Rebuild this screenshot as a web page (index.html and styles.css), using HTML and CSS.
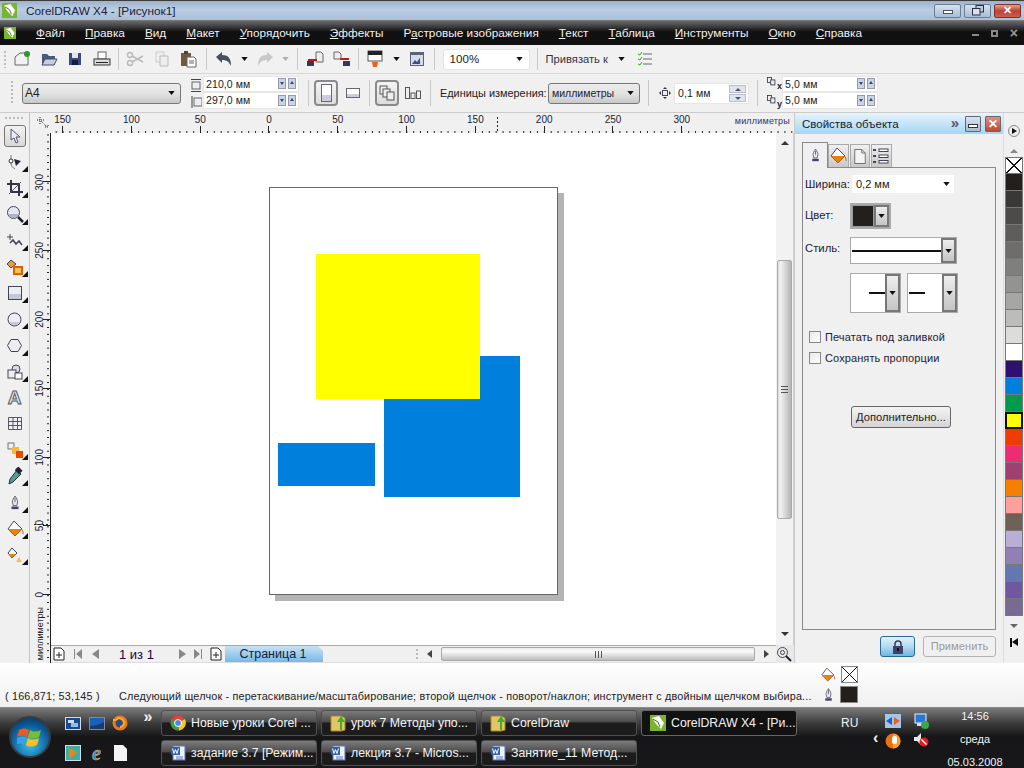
FILE: index.html
```html
<!DOCTYPE html>
<html lang="ru">
<head>
<meta charset="utf-8">
<title>CorelDRAW X4</title>
<link rel="stylesheet" href="styles.css">
</head>
<body>
<svg class="defs" width="0" height="0">
<defs>
<symbol id="cdr" viewBox="0 0 16 16"><rect width="16" height="16" fill="#7ab42c"/><path d="M2 3l7-2 5 7-3 6-5-5z" fill="#fff"/><path d="M3 4l5 3 2 5" stroke="#3c6a10" fill="none"/></symbol>
<symbol id="pen" viewBox="0 0 16 18"><path d="M8 1c2 3 3 5 3 7l-1 4H6L5 8c0-2 1-4 3-7z" fill="#e8e8f0" stroke="#55556a"/><path d="M8 3v5" stroke="#55556a"/><rect x="4" y="13" width="8" height="3" fill="#44446a"/></symbol>
<symbol id="fill" viewBox="0 0 18 18"><path d="M8 1l8 8-7 7-7-7z" fill="#fff" stroke="#44446a"/><path d="M2 9h14l-7 7z" fill="#f08000"/><path d="M15 9c2 1 2 3 2 5" stroke="#c06000" fill="none"/></symbol>
<symbol id="doc" viewBox="0 0 16 18"><path d="M2 1h8l4 4v12H2z" fill="#f4f4f4" stroke="#666"/><path d="M10 1v4h4" fill="none" stroke="#666"/></symbol>
<symbol id="add" viewBox="0 0 12 14"><path d="M1 1h7l3 3v9H1z" fill="#fff" stroke="#222"/><path d="M6 5v6M3 8h6" stroke="#222"/></symbol>
<symbol id="word" viewBox="0 0 16 16"><rect x="3" y="1" width="12" height="14" fill="#eef2fa" stroke="#5a78b8"/><path d="M6 12h7M6 14h7" stroke="#5a78b8"/><rect x="1" y="2" width="9" height="8" fill="#2f5fb4"/><path d="M2.5 3.5l1.500 5 1.500-4 1.500 4 1.500-5" fill="none" stroke="#fff"/></symbol>
<symbol id="folder" viewBox="0 0 16 18"><path d="M1 2h10l4 2v12l-4 1H1z" fill="#e4c468" stroke="#a88830"/><path d="M10 16V8H7l4-6 4 6h-3v8z" fill="#38b030"/></symbol>
<symbol id="tri" viewBox="0 0 8 5"><path d="M0 0h8L4 5z" fill="#111"/></symbol>
<symbol id="boxes" viewBox="0 0 12 12"><rect x=".5" y=".5" width="5" height="6" fill="#eee" stroke="#334"/><rect x="4.500" y="3.500" width="5" height="6" fill="#eee" stroke="#334"/></symbol>
</defs>
</svg>

<div class="title">
  <svg class="title-logo"><use href="#cdr"/></svg>
  <span class="title-text">CorelDRAW X4 - [Рисунок1]</span>
  <div class="win-btns">
    <span class="wb"><i class="wb-min"></i></span>
    <span class="wb"><svg width="12" height="11" viewBox="0 0 12 11"><rect x="4" y=".5" width="7.500" height="6.500" fill="#bcd" stroke="#234"/><rect x=".5" y="3.500" width="7.500" height="6.500" fill="#dde" stroke="#234"/></svg></span>
    <span class="wb wb-close">✕</span>
  </div>
</div>

<div class="menu">
  <svg class="menu-logo"><use href="#cdr"/></svg>
  <nav class="menu-items">
    <span><u>Ф</u>айл</span><span><u>П</u>равка</span><span><u>В</u>ид</span><span><u>М</u>акет</span><span><u>У</u>порядочить</span><span><u>Э</u>ффекты</span><span>Р<u>а</u>стровые изображения</span><span><u>Т</u>екст</span><span><u>Т</u>аблица</span><span><u>И</u>нструменты</span><span><u>О</u>кно</span><span><u>С</u>правка</span>
  </nav>
  <div class="doc-btns"><i class="db-min"></i><i class="db-res"></i><b>×</b></div>
</div>

<div class="bar bar-std">
  <span class="grip"></span>
  <span class="ic"><svg width="18" height="18" viewBox="0 0 18 18"><path d="M2 7l5-4h8v12H2z" fill="#f2f2f2" stroke="#666"/><circle cx="14" cy="4" r="3" fill="#2a9a20"/></svg></span>
  <span class="ic"><svg width="18" height="18" viewBox="0 0 18 18"><path d="M2 4h5l2 2h6v9H2z" fill="#4a5a7c"/><path d="M2 15l3-6h12l-3 6z" fill="#c8cedc" stroke="#44506a"/></svg></span>
  <span class="ic"><svg width="16" height="16" viewBox="0 0 16 16"><path d="M2 2h12v12H2z" fill="#3c4a78"/><rect x="5" y="2" width="6" height="5" fill="#dfe3ee"/><rect x="5" y="9" width="6" height="5" fill="#111c44"/></svg></span>
  <span class="ic"><svg width="18" height="18" viewBox="0 0 18 18"><rect x="5" y="2" width="8" height="7" fill="#fff" stroke="#666"/><rect x="1" y="9" width="16" height="6" fill="#dcdcdc" stroke="#333"/><rect x="3" y="12" width="12" height="1" fill="#222"/></svg></span>
  <span class="sep sep-a"></span>
  <span class="ic"><svg width="18" height="16" viewBox="0 0 18 16"><circle cx="4" cy="4" r="2.500" fill="none" stroke="#bbb" stroke-width="1.500"/><circle cx="4" cy="12" r="2.500" fill="none" stroke="#bbb" stroke-width="1.500"/><path d="M6 5l11 6M6 11l11-6" stroke="#bbb" stroke-width="1.500"/></svg></span>
  <span class="ic"><svg width="16" height="16" viewBox="0 0 16 16"><path d="M2 1h8v10H2z" fill="#eee" stroke="#ccc"/><path d="M6 5h8v10H6z" fill="#eee" stroke="#bbb"/></svg></span>
  <span class="ic"><svg width="18" height="18" viewBox="0 0 18 18"><rect x="2" y="3" width="10" height="13" fill="#6e5a3c"/><rect x="5" y="1" width="4" height="3" fill="#444"/><path d="M8 7h7l2 2v8H8z" fill="#fff" stroke="#666"/><path d="M10 11h5M10 13h5" stroke="#666"/></svg></span>
  <span class="sep sep-b"></span>
  <span class="ic ic-s"><svg width="18" height="16" viewBox="0 0 18 16"><path d="M1 6l6-5v3c6 0 9 3 9 11-2-4-4-6-9-6v3z" fill="#48505e"/></svg></span><svg class="dd" width="7" height="4"><use href="#tri"/></svg>
  <span class="ic ic-s2"><svg width="18" height="16" viewBox="0 0 18 16"><path d="M17 6l-6-5v3C5 4 2 7 2 15c2-4 4-6 9-6v3z" fill="#c8c8c8"/></svg></span><svg class="dd dd-off" width="7" height="4"><use href="#tri"/></svg>
  <span class="sep sep-c"></span>
  <span class="ic ic-i"><svg width="18" height="16" viewBox="0 0 18 16"><path d="M10 1h5l2 2v8h-7z" fill="#eee" stroke="#666"/><path d="M2 8h9v2H2z" fill="#c01818"/><rect x="1" y="10" width="7" height="5" fill="#333a60"/></svg></span>
  <span class="ic ic-i"><svg width="18" height="16" viewBox="0 0 18 16"><path d="M1 1h5l2 2v5H1z" fill="#eee" stroke="#666"/><path d="M7 7h9v2H7z" fill="#c01818"/><rect x="10" y="10" width="7" height="5" fill="#333a60"/></svg></span>
  <span class="sep sep-d"></span>
  <span class="ic ic-j"><svg width="16" height="18" viewBox="0 0 16 18"><rect x="1" y="1" width="14" height="10" fill="#fff" stroke="#555"/><rect x="1" y="1" width="14" height="4" fill="#222"/><path d="M5 12h6l-1 5H6z" fill="#f06018"/></svg></span><svg class="dd dd-j" width="7" height="4"><use href="#tri"/></svg>
  <span class="ic ic-k"><svg width="16" height="16" viewBox="0 0 16 16"><rect x="1" y="1" width="14" height="14" fill="#5a6478"/><rect x="2" y="4" width="12" height="10" fill="#d4dcec"/><path d="M3 13l3-4 2 2 3-4v6z" fill="#39517c"/></svg></span>
  <span class="sep sep-e"></span>
  <span class="combo"><span>100%</span><svg width="7" height="4"><use href="#tri"/></svg></span>
  <span class="sep sep-f"></span>
  <span class="snap">Привязать к</span><svg class="dd snap-dd" width="7" height="4"><use href="#tri"/></svg>
  <svg class="snap-ic" width="14" height="16" viewBox="0 0 14 16"><path d="M5 3h9M5 8h9M5 13h9" stroke="#667"/><path d="M0 3l2 1 2-3M0 8l2 1 2-3M0 13l2 1 2-3" stroke="#3a9a20" fill="none"/></svg>
</div>

<div class="bar bar-prop">
  <span class="grip grip-p"></span>
  <span class="select sel-a4"><span>A4</span><svg width="7" height="4"><use href="#tri"/></svg></span>
  <span class="dims">
    <span class="dim-ic"><svg width="10" height="13" viewBox="0 0 10 13"><path d="M0 .5h10M0 12.500h10" stroke="#444"/><rect x="1" y="3" width="8" height="7" fill="#eee" stroke="#666"/></svg><svg width="12" height="12" viewBox="0 0 12 12"><path d="M2 0v12" stroke="#444"/><rect x="4" y="2" width="8" height="8" fill="#eee" stroke="#666"/></svg></span>
    <span class="stack">
      <span class="field"><span>210,0 мм</span><i class="spin"></i><i class="spin spin-u"></i></span>
      <span class="field"><span>297,0 мм</span><i class="spin"></i><i class="spin spin-u"></i></span>
    </span>
  </span>
  <span class="sep sep-g"></span>
  <span class="tbtn on"><i class="pg-port"></i></span>
  <span class="tbtn"><i class="pg-land"></i></span>
  <span class="sep sep-h"></span>
  <span class="tbtn on tbtn-b"><svg width="16" height="16" viewBox="0 0 16 16"><rect x="1" y="1" width="7" height="8" fill="#eee" stroke="#555"/><rect x="4" y="4" width="7" height="8" fill="#eee" stroke="#555"/><rect x="8" y="7" width="7" height="8" fill="#eee" stroke="#555"/></svg></span>
  <span class="tbtn tbtn-c"><svg width="16" height="12" viewBox="0 0 16 12"><rect x=".5" y=".5" width="4" height="11" fill="#eee" stroke="#555"/><rect x="6" y="6" width="4" height="5.500" fill="#eee" stroke="#555"/><rect x="11.500" y="4" width="4" height="7.500" fill="#eee" stroke="#555"/></svg></span>
  <span class="sep sep-i"></span>
  <span class="lbl-units">Единицы измерения:</span>
  <span class="select sel-units"><span>миллиметры</span><svg width="7" height="4"><use href="#tri"/></svg></span>
  <span class="sep sep-j"></span>
  <svg class="nudge-ic" width="12" height="12" viewBox="0 0 12 12"><path d="M6 0l2 2H4zM6 12l2-2H4zM0 6l2-2v4zM12 6l-2-2v4z" fill="#334"/><rect x="3.500" y="3.500" width="5" height="5" fill="#eee" stroke="#445"/></svg>
  <span class="nudge"><span>0,1 мм</span><span class="nspin"><i></i><i class="down"></i></span></span>
  <span class="sep sep-k"></span>
  <span class="dims dims-xy">
    <span class="xy-ic">
      <span class="xy-row"><svg width="10" height="10"><use href="#boxes"/></svg><b>x</b></span>
      <span class="xy-row"><svg width="10" height="10"><use href="#boxes"/></svg><b>y</b></span>
    </span>
    <span class="stack">
      <span class="field"><span>5,0 мм</span><i class="spin"></i><i class="spin spin-u"></i></span>
      <span class="field"><span>5,0 мм</span><i class="spin"></i><i class="spin spin-u"></i></span>
    </span>
  </span>
</div>

<div class="main">
  <aside class="toolbox">
    <span class="grip-h"></span>
    <span class="tool tool-on"><svg width="14" height="16" viewBox="0 0 14 16"><path d="M3 1v11l3-2 2 5 2-1-2-5h4z" fill="#e8ecf4" stroke="#556"/></svg></span>
    <span class="tool fly"><svg width="16" height="18" viewBox="0 0 16 18"><path d="M4 2v8c0 3 2 5 4 6" fill="none" stroke="#778"/><circle cx="4" cy="8" r="2" fill="#fff" stroke="#333"/><path d="M7 6l7 2-5 5z" fill="#223"/></svg></span>
    <span class="tool fly"><svg width="16" height="16" viewBox="0 0 16 16"><path d="M4 0v12h12M0 4h12v12" fill="none" stroke="#334" stroke-width="2"/><path d="M2 14L14 2" stroke="#556"/></svg></span>
    <span class="tool fly"><svg width="18" height="18" viewBox="0 0 18 18"><circle cx="7.500" cy="7.500" r="6" fill="#e4e6f0" stroke="#445"/><path d="M2 9h11c-1 3-3 4-5 4s-5-1-6-4z" fill="#b0b4c4"/><path d="M12 12l5 5" stroke="#223" stroke-width="2.500"/></svg></span>
    <span class="tool fly"><svg width="18" height="14" viewBox="0 0 18 14"><path d="M4 0v6M1 3h6" stroke="#445"/><path d="M4 9l3-3 3 4 3-3 3 4" fill="none" stroke="#445" stroke-width="1.500"/></svg></span>
    <span class="tool fly"><svg width="18" height="16" viewBox="0 0 18 16"><path d="M5 1l5 4-5 4-4-4z" fill="#e0a040" stroke="#445"/><rect x="8" y="8" width="8" height="7" fill="#f4c060" stroke="#e06000" stroke-width="2"/></svg></span>
    <span class="tool fly"><svg width="14" height="14" viewBox="0 0 14 14"><rect x=".5" y=".5" width="13" height="13" fill="#eceef4" stroke="#445"/><rect x="1" y="8" width="12" height="5" fill="#c4c8d4"/></svg></span>
    <span class="tool fly"><svg width="15" height="15" viewBox="0 0 15 15"><circle cx="7.500" cy="7.500" r="6.500" fill="#eceef4" stroke="#445"/><path d="M2 10h11c-1 2-3 3-5.500 3S3 12 2 10z" fill="#c4c8d4"/></svg></span>
    <span class="tool fly"><svg width="15" height="13" viewBox="0 0 15 13"><path d="M4 .5h7l3.500 6-3.500 6H4L.5 6.500z" fill="#eceef4" stroke="#445"/></svg></span>
    <span class="tool fly"><svg width="16" height="16" viewBox="0 0 16 16"><circle cx="9" cy="5" r="4" fill="#d8dce8" stroke="#445"/><rect x="1" y="6" width="8" height="8" fill="#eceef4" stroke="#445"/><rect x="8" y="9" width="7" height="6" fill="#fff" stroke="#445"/></svg></span>
    <span class="tool tool-a">A</span>
    <span class="tool"><svg width="14" height="13" viewBox="0 0 14 13"><path d="M.5.500h13v12H.5zM.5 4.500h13M.5 8.500h13M5 .5v12M9.500.5v12" fill="#eef0f4" stroke="#556"/></svg></span>
    <span class="tool fly"><svg width="16" height="16" viewBox="0 0 16 16"><rect x="1" y="1" width="6" height="6" fill="#eee" stroke="#777"/><rect x="5" y="5" width="7" height="7" fill="#f8b840"/><rect x="9" y="9" width="7" height="7" fill="#e84800"/></svg></span>
    <span class="tool fly"><svg width="16" height="18" viewBox="0 0 16 18"><path d="M10 3l4 4-8 8-4 2 1-5z" fill="#5a9a88" stroke="#234"/><rect x="9" y="1" width="6" height="5" fill="#223" transform="rotate(45 12 3)"/></svg></span>
    <span class="tool fly"><svg width="14" height="18"><use href="#pen"/></svg></span>
    <span class="tool fly"><svg width="18" height="18"><use href="#fill"/></svg></span>
    <span class="tool fly"><svg width="16" height="16" viewBox="0 0 16 16"><path d="M5 1l5 5-5 5-4-5z" fill="#f4f4f4" stroke="#445"/><path d="M2 7h7l-4 4z" fill="#f08000"/><path d="M9 15l3-5 3 5z" fill="#f0c050"/></svg></span>
  </aside>

  <section class="work">
    <div class="corner"><svg width="12" height="12" viewBox="0 0 12 12"><path d="M0 3h8M3 0v8M4 4l6 6M8 10h3v-3" stroke="#222" stroke-dasharray="1 1" fill="none"/></svg></div>
    <div class="hruler">
      <span>150</span><span>100</span><span>50</span><span>0</span><span>50</span><span>100</span><span>150</span><span>200</span><span>250</span><span>300</span>
      <em class="ru-unit">миллиметры</em>
      <i class="h-mark"></i>
    </div>
    <div class="vruler">
      <span><b>300</b></span><span><b>250</b></span><span><b>200</b></span><span><b>150</b></span><span><b>100</b></span><span><b>50</b></span><span><b>0</b></span>
      <em class="ru-unit-v">миллиметры</em>
      <i class="v-mark"></i>
    </div>
    <div class="canvas">
      <div class="page"></div>
      <div class="shape s-big"></div>
      <div class="shape s-yellow"></div>
      <div class="shape s-small"></div>
    </div>
    <div class="vscroll">
      <span class="arr arr-up"></span>
      <span class="thumb"><i></i></span>
      <span class="arr arr-dn"></span>
    </div>
    <div class="nav">
      <svg class="n1" width="12" height="14"><use href="#add"/></svg>
      <span class="n n-first"></span>
      <span class="n n-prev"></span>
      <span class="n-count">1 из 1</span>
      <span class="n n-next"></span>
      <span class="n n-last"></span>
      <svg class="n2" width="12" height="14"><use href="#add"/></svg>
      <span class="page-tab">Страница 1</span>
      <span class="n-grip"></span>
      <span class="n n-left"></span>
      <span class="htrack"><i></i></span>
      <span class="n n-right"></span>
    </div>
    <div class="zoom-btn"><svg width="16" height="16" viewBox="0 0 16 16"><circle cx="6.500" cy="6.500" r="5" fill="#e8e8e8" stroke="#445"/><circle cx="6.500" cy="6.500" r="2" fill="none" stroke="#445"/><path d="M10 10l5 5" stroke="#223" stroke-width="2"/></svg></div>
  </section>

  <aside class="panel">
    <header class="p-head">
      <span class="p-title">Свойства объекта</span>
      <span class="p-more">»</span>
      <span class="p-btn"><i></i></span>
      <span class="p-btn p-close">✕</span>
    </header>
    <div class="p-body">
      <div class="tabs">
        <span class="tab tab-on"><svg width="13" height="17"><use href="#pen"/></svg></span>
        <span class="tab"><svg width="18" height="18"><use href="#fill"/></svg></span>
        <span class="tab"><svg width="14" height="17"><use href="#doc"/></svg></span>
        <span class="tab tab-l"><svg width="16" height="16" viewBox="0 0 16 16"><path d="M0 2h3M0 8h3M0 14h3" stroke="#445" stroke-width="2"/><rect x="6" y="1" width="9" height="2.500" fill="#fff" stroke="#445"/><rect x="6" y="7" width="9" height="2.500" fill="#fff" stroke="#445"/><rect x="6" y="12.500" width="9" height="2.500" fill="#fff" stroke="#445"/></svg></span>
      </div>
      <div class="box">
        <div class="row row-w"><label>Ширина:</label><span class="width-in"><span>0,2 мм</span><svg width="7" height="4"><use href="#tri"/></svg></span></div>
        <div class="row row-c"><label>Цвет:</label><span class="color-in"><i></i><b class="ddb"><svg width="7" height="4"><use href="#tri"/></svg></b></span></div>
        <div class="row row-s"><label>Стиль:</label><span class="style-in"><i class="ln"></i><b class="ddb"><svg width="7" height="4"><use href="#tri"/></svg></b></span></div>
        <div class="ends">
          <span class="end"><i class="ln-r"></i><b class="ddb"><svg width="7" height="4"><use href="#tri"/></svg></b></span>
          <span class="end end-2"><i class="ln-l"></i><b class="ddb"><svg width="7" height="4"><use href="#tri"/></svg></b></span>
        </div>
        <label class="chk chk-1"><i></i>Печатать под заливкой</label>
        <label class="chk chk-2"><i></i>Сохранять пропорции</label>
        <span class="more-btn">Дополнительно...</span>
      </div>
      <div class="p-foot">
        <span class="lock"><svg width="12" height="14" viewBox="0 0 12 14"><path d="M3 6V4a3 3 0 016 0v2" fill="none" stroke="#3a3a60" stroke-width="1.500"/><rect x="1" y="6" width="10" height="8" fill="#40406c"/><rect x="5" y="8" width="2" height="3" fill="#111"/></svg></span>
        <span class="apply">Применить</span>
      </div>
    </div>
  </aside>

  <aside class="palette">
    <span class="pal-play"><i></i></span>
    <span class="pal-up"></span>
    <div class="swatches">
      <i class="sw-x"></i>
      <i class="c1"></i><i class="c2"></i><i class="c3"></i><i class="c4"></i><i class="c5"></i><i class="c6"></i><i class="c7"></i><i class="c8"></i><i class="c9"></i><i class="c10"></i><i class="c11"></i><i class="c12"></i><i class="c13"></i><i class="c14"></i><i class="c15"></i><i class="c16"></i><i class="c17"></i><i class="c18"></i><i class="c19"></i><i class="c20"></i><i class="c21"></i><i class="c22"></i><i class="c23"></i><i class="c24"></i><i class="c25"></i><i class="c26"></i>
    </div>
    <span class="pal-dn"></span>
    <span class="pal-end"></span>
  </aside>
</div>

<footer class="status">
  <span class="coords">( 166,871; 53,145 )</span>
  <span class="msg">Следующий щелчок - перетаскивание/масштабирование; второй щелчок - поворот/наклон; инструмент с двойным щелчком выбира...</span>
  <div class="st-icons">
    <span class="st-row"><svg width="16" height="16"><use href="#fill"/></svg><i class="st-x"></i></span>
    <span class="st-row"><svg width="13" height="16"><use href="#pen"/></svg><i class="st-d"></i></span>
  </div>
</footer>

<div class="taskbar">
  <span class="orb"><svg width="26" height="26" viewBox="0 0 26 26"><path d="M2 6c4-2 7-2 10 0l-2 7c-3-2-6-2-10 0z" fill="#e85a20"/><path d="M13 6c3 2 7 2 11 0l-2 7c-4 2-8 2-11 0z" fill="#78c030"/><path d="M0 14c4-2 7-2 10 0l-2 7c-3-2-6-2-10 0z" fill="#38a0e8"/><path d="M11 14c3 2 7 2 11 0l-2 7c-4 2-8 2-11 0z" fill="#f8c020"/></svg></span>
  <div class="quick">
    <span class="q"><svg width="16" height="13" viewBox="0 0 16 13"><rect x=".5" y=".5" width="15" height="12" fill="#1a4a90" stroke="#cde"/><rect x="3" y="3" width="6" height="3" fill="#cde"/><rect x="6" y="6" width="7" height="4" fill="#9bd"/></svg></span>
    <span class="q"><svg width="16" height="13" viewBox="0 0 16 13"><rect x=".5" y=".5" width="15" height="12" fill="#1860b8" stroke="#889"/><path d="M1 9c4 0 8-1 14-4v7H1z" fill="#183a70"/></svg></span>
    <span class="q"><svg width="16" height="16" viewBox="0 0 16 16"><circle cx="8" cy="8" r="7.500" fill="#f07818"/><circle cx="8" cy="8" r="4.500" fill="#2a4a8c"/><path d="M1 5c3 0 4 1 5-2 3 0 6 2 6 5 0 2-2 4-4 4" fill="none" stroke="#f8b020" stroke-width="2"/></svg></span>
    <span class="q q-d"><svg width="10" height="12" viewBox="0 0 10 12"><path d="M1 0l8 6-8 6z" fill="#f08018"/></svg></span>
    <span class="q q-e">e</span>
    <span class="q"><svg width="13" height="16" viewBox="0 0 13 16"><path d="M0 0h9l4 4v12H0z" fill="#f4f4f4"/></svg></span>
  </div>
  <span class="more-q">»</span>
  <div class="tasks">
    <span class="task"><svg width="16" height="16" viewBox="0 0 16 16"><circle cx="8" cy="8" r="7.500" fill="#e84030"/><path d="M8 8L15 4a8 8 0 01-6 11.500z" fill="#f8c820"/><path d="M8 8l1 7.500A8 8 0 011.500 4z" fill="#38a040"/><circle cx="8" cy="8" r="3.500" fill="#4a88e8" stroke="#fff"/></svg><span>Новые уроки Corel ...</span></span>
    <span class="task"><svg width="16" height="18"><use href="#folder"/></svg><span>урок 7 Методы упо...</span></span>
    <span class="task"><svg width="16" height="18"><use href="#folder"/></svg><span>CorelDraw</span></span>
    <span class="task task-on"><svg width="16" height="16"><use href="#cdr"/></svg><span>CorelDRAW X4 - [Ри...</span></span>
    <span class="task"><svg width="16" height="16"><use href="#word"/></svg><span>задание 3.7 [Режим...</span></span>
    <span class="task"><svg width="16" height="16"><use href="#word"/></svg><span>лекция 3.7 - Micros...</span></span>
    <span class="task"><svg width="16" height="16"><use href="#word"/></svg><span>Занятие_11 Метод...</span></span>
  </div>
  <span class="lang">RU</span>
  <span class="tray-more">‹</span>
  <div class="tray">
    <svg width="16" height="16" viewBox="0 0 16 16"><rect y="1" width="16" height="14" fill="#a4c4ec"/><path d="M1 8l6-4v8z" fill="#1860c8"/><path d="M15 8l-6-4v8z" fill="#e86018"/></svg>
    <svg width="15" height="16" viewBox="0 0 15 16"><rect x="1" y="1" width="11" height="9" fill="#2878d8" stroke="#eef"/><rect x="3" y="10" width="7" height="3" fill="#dde"/><circle cx="11" cy="12" r="4" fill="#38a848"/></svg>
    <svg width="16" height="16" viewBox="0 0 16 16"><circle cx="8" cy="8" r="7.500" fill="#f07010"/><path d="M8 .5a7.500 7.500 0 010 15" fill="#f8a020"/><rect x="7" y="3" width="5" height="8" rx="2" fill="#fff"/></svg>
    <svg width="15" height="14" viewBox="0 0 15 14"><path d="M0 4h3l4-4v12L3 8H0z" fill="#e8e8e8"/><circle cx="10" cy="9" r="4.500" fill="#e81818"/><path d="M7.500 6.500l5 5" stroke="#fff" stroke-width="1.500"/></svg>
  </div>
  <div class="clock"><span>14:56</span><span>среда</span><span>05.03.2008</span></div>
</div>
</body>
</html>
```
FILE: styles.css
```css
*{box-sizing:border-box}
html,body{margin:0;padding:0}
body{width:1024px;height:768px;overflow:hidden;background:#f0f0f0;font:12px "Liberation Sans",sans-serif;color:#222;display:flex;flex-direction:column}
.defs{position:absolute}
i,em,b{font-style:normal;font-weight:normal;display:block}

/* title */
.title{height:21px;flex:none;display:flex;align-items:center;background:linear-gradient(#9db2cb,#b9cde3 45%,#a9bfd8);border-top:1px solid #3c3c3c;border-bottom:1px solid #777}
.title-logo{width:15px;height:15px;margin-left:2px;flex:none}
.title-text{margin-left:9px;color:#20203c;font-size:11.800px}
.win-btns{margin-left:auto;margin-right:3px;display:flex;gap:3px}
.wb{width:27px;height:14px;border:1px solid #6c7d92;border-radius:2px;background:linear-gradient(#d6e2ef,#a9bdd4);display:flex;align-items:center;justify-content:center}
.wb-min{width:10px;height:4px;background:#fff;border:1px solid #456;margin-top:3px}
.wb-close{background:linear-gradient(#e8a090,#c04030 50%,#c86050);border-color:#803028;color:#fff;font-size:11px;font-weight:bold;line-height:1}

/* menu */
.menu{height:24px;flex:none;display:flex;align-items:center;background:linear-gradient(#6a6a6a,#3a3a3a 25%,#101010 45%,#111);color:#f2f2f2;position:relative}
.menu-logo{width:12px;height:16px;margin-left:4px;flex:none}
.menu-items{margin-left:20px;display:flex;gap:20px;font-size:11.800px}
.menu-items span{white-space:nowrap}
.doc-btns{margin-left:auto;margin-right:6px;display:flex;align-items:center;gap:12px;color:#999}
.db-min{width:7px;height:2px;background:#888;margin-top:3px}
.db-res{width:7px;height:7px;border:2px solid #888}
.doc-btns b{font-size:14px;font-weight:bold;color:#999}

/* toolbars */
.bar{flex:none;display:flex;align-items:center;background:#f0f0f0;border-bottom:1px solid #d8d8d8}
.bar-std{height:29px;background:#f1f1f1}
.bar-prop{height:39px;border-bottom:1px solid #ccc}
.grip{width:2px;height:17px;margin-left:4px;background:repeating-linear-gradient(#bbb 0 2px,transparent 2px 4px);flex:none}
.grip-p{margin-left:11px;height:24px}
.ic{width:26.500px;height:24px;display:flex;align-items:center;justify-content:center;flex:none}
.bar-std .grip + .ic{margin-left:3px}
.sep{width:1px;height:22px;background:#c8c8c8;flex:none}
.sep-a{margin:0 3px}
.sep-b{margin:0 7px 0 4px}
.ic-s{width:20px}
.dd{flex:none;margin-left:7px}
.ic-s2{width:20px;margin-left:7px}
.dd-off{opacity:.3}
.sep-c{margin:0 4px 0 8px}
.ic-i{width:27px}
.sep-d{margin:0 4px 0 2px}
.ic-j{width:24px}
.dd-j{margin-left:6px}
.ic-k{width:26px;margin-left:4px}
.sep-e{margin:0 8px 0 4px}
.combo{width:87px;height:21px;background:#fff;border:1px solid #e4e4e4;border-radius:3px;display:flex;align-items:center;justify-content:space-between;padding:0 6px;font-size:11.500px;flex:none;letter-spacing:.1px}
.sep-f{margin:0 8px 0 7px}
.snap{font-size:11.200px;color:#334;white-space:nowrap}
.snap-dd{margin-left:10px}
.snap-ic{margin-left:13px}

.select{height:21px;display:flex;align-items:center;justify-content:space-between;background:linear-gradient(#ececec,#e2e2e2 50%,#c8c8c8);border:1px solid #777;border-radius:3px;padding:0 5px 0 2px;flex:none;font-size:12px}
.sel-a4{width:159px;margin-left:9px}
.dims{display:flex;align-items:center;margin-left:8px;flex:none}
.dim-ic{width:14px;display:flex;flex-direction:column;gap:4px;align-items:center}
.stack{display:flex;flex-direction:column;margin-top:-2px}
.field{width:96px;height:16.500px;background:#fff;border:1px solid #e6e6e6;display:flex;align-items:center;padding-left:2px;font-size:10.500px;letter-spacing:.1px}
.field span{flex:1;white-space:nowrap}
.spin{width:8px;height:11px;background:#c8d4e8;border:1px solid #99a;margin-right:2px;position:relative}
.spin::after{content:"";position:absolute;left:1px;top:3px;border:2px solid transparent;border-top:3px solid #446}
.spin-u::after{top:0;border-top:2px solid transparent;border-bottom:3px solid #446}
.sep-g{margin:0 5px 0 9px;height:26px}
.tbtn{width:24px;height:26px;display:flex;align-items:center;justify-content:center;flex:none;margin-right:7px}
.tbtn.on{border:2px solid #8a8a8a;border-radius:4px;background:linear-gradient(#f4f4f4,#dcdcdc)}
.pg-port{width:11px;height:18px;border:1px solid #667;background:linear-gradient(#fff 60%,#ccd 60%)}
.pg-land{width:14px;height:10px;border:1px solid #667;background:linear-gradient(#fff 60%,#ccd 60%)}
.tbtn:not(.on){width:15px}
.sep-h{margin:0 5px 0 2px;height:26px}
.tbtn-c{margin-left:-1px;margin-right:9px;width:16px!important}
.sep-i{margin:0 9px 0 0;height:26px}
.lbl-units{white-space:nowrap;font-size:10.900px;width:108px;flex:none}
.sel-units{width:92px;color:#223;padding-left:3px;font-size:10.500px}
.sep-j{margin:0 10px 0 8px;height:26px}
.nudge-ic{flex:none}
.nudge{width:75px;height:21px;margin-left:3px;background:#fff;border:1px solid #e6e6e6;display:flex;align-items:center;justify-content:space-between;padding:0 2px 0 3px;flex:none;font-size:10.500px;letter-spacing:.1px}
.nspin{display:flex;flex-direction:column;gap:1px}
.nspin i{width:17px;height:8px;background:#e0e4ec;border:1px solid #bbc;position:relative}
.nspin i::after{content:"";position:absolute;left:5px;top:-1px;border:3px solid transparent;border-bottom:3px solid #557}
.nspin i.down::after{top:2px;border-bottom:3px solid transparent;border-top:3px solid #557}
.sep-k{margin:0 9px 0 8px;height:26px}
.dims-xy{margin-left:0}
.xy-ic{width:15px;display:flex;flex-direction:column;gap:4px;flex:none}
.xy-row{display:flex;height:14px;font-size:9px;color:#223;line-height:9px;font-weight:bold}
.xy-row b{align-self:flex-end;font-weight:bold}

/* main */
.main{height:550px;flex:none;display:flex;background:#f0f0f0}
.toolbox{width:30px;flex:none;display:flex;flex-direction:column;align-items:center;border-right:1px solid #c4c4c4;padding-top:4px}
.grip-h{width:20px;height:2px;background:repeating-linear-gradient(90deg,#bbb 0 2px,transparent 2px 4px);margin-bottom:6px}
.tool{width:22px;height:26.200px;flex:none;display:flex;align-items:center;justify-content:center;position:relative}
.tool-on{height:22px;margin:0 0 2px;border:1px solid #777;border-radius:3px;background:linear-gradient(#f2f2f2,#d8d8d8)}
.fly::after{content:"";position:absolute;right:-2px;bottom:3px;border:3px solid transparent;border-right-color:#111;border-bottom-color:#111}
.tool-a{font:bold 19px "Liberation Sans",sans-serif;color:#e8eaf0;-webkit-text-stroke:1px #556}

.work{width:764px;flex:none;display:grid;grid-template-columns:21px 725px 18px;grid-template-rows:20px 512px 18px;position:relative}
.corner{display:flex;align-items:center;justify-content:center;padding-left:4px}
.hruler{grid-column:2/4;position:relative;display:flex;overflow:hidden;background:linear-gradient(90deg,#222 1px,transparent 1px) 4.700px 18px/6.880px 2px repeat-x;font-size:10px;color:#223}
.hruler span{width:68.800px;flex:none;text-align:center;line-height:12px;padding-top:1px;background:linear-gradient(#222,#222) center bottom/1px 7px no-repeat}
.hruler span:first-child{margin-left:-22.800px}
.ru-unit{position:absolute;right:4px;top:2px;font-size:9px;line-height:12px;background:#f0f0f0;color:#336;padding-left:2px;letter-spacing:.2px}
.h-mark{position:absolute;left:446px;top:4px;height:16px;width:1px;background:repeating-linear-gradient(#222 0 2px,transparent 2px 4px)}
.vruler{grid-row:2/4;position:relative;display:flex;flex-direction:column;padding-top:14.600px;overflow:hidden;border-right:1px solid #222;background:linear-gradient(#222 1px,transparent 1px) 17px 1.500px/2px 6.880px repeat-y;font-size:10px;color:#223}
.vruler span{height:68.800px;flex:none;display:flex;align-items:center;justify-content:flex-start;padding-left:4px;background:linear-gradient(#222,#222) right center/7px 1px no-repeat}
.vruler b{writing-mode:vertical-rl;transform:rotate(180deg);line-height:11px}
.ru-unit-v{position:absolute;left:5px;bottom:3px;font-size:9px;line-height:11px;writing-mode:vertical-rl;transform:rotate(180deg);background:#f0f0f0;color:#222}
.v-mark{position:absolute;left:4px;top:391px;width:16px;height:1px;background:repeating-linear-gradient(90deg,#222 0 2px,transparent 2px 4px)}
.canvas{position:relative;background:#fff;overflow:hidden}
.page{position:absolute;left:218px;top:54px;width:289px;height:408px;background:#fff;border:1px solid #666;box-shadow:6px 6px 0 #b4b4b4}
.shape{position:absolute}
.s-big{left:333px;top:223px;width:136px;height:141px;background:#0080dc}
.s-yellow{left:265px;top:121px;width:164px;height:145px;background:#ff0}
.s-small{left:227px;top:310px;width:97px;height:43px;background:#0080dc}
.vscroll{display:flex;flex-direction:column;align-items:center;background:#f2f2f2;border-right:1px solid #ccc;position:relative;padding-top:8px}
.arr{border:4px solid transparent}
.arr-up{border-bottom:4px solid #333;border-top:0}
.thumb{width:15px;height:259px;margin-top:115px;background:linear-gradient(90deg,#dedede,#f2f2f2 20%,#b4b4b4);border:1px solid #aaa;border-radius:2px;display:flex;align-items:center;justify-content:center}
.thumb i{width:7px;height:7px;background:repeating-linear-gradient(#555 0 1px,transparent 1px 3px)}
.arr-dn{border-top:4px solid #333;border-bottom:0;margin-top:113px}
.nav{display:flex;align-items:center;background:#f0f0f0;border-top:1px solid #aaa;border-bottom:1px solid #ddd;padding-left:2px;font-size:12px}
.n{width:8px;height:10px;flex:none;position:relative}
.n::after{content:"";position:absolute;top:0;border:5px solid transparent}
.n-first{margin-left:9px;border-left:1px solid #888}
.n-first::after{left:1px;border-right:6px solid #888;border-left:0}
.n-prev{margin-left:10px}
.n-prev::after{left:0;border-right:7px solid #888;border-left:0}
.n-count{width:35px;margin-left:19px;white-space:nowrap;font-size:13px;color:#204}
.n-next{margin-left:25px}
.n-next::after{left:0;border-left:7px solid #888;border-right:0}
.n-last{margin-left:7px;border-right:1px solid #888}
.n-last::after{left:0;border-left:6px solid #888;border-right:0}
.n2{margin-left:8px;flex:none}
.n1{flex:none}
.page-tab{width:98px;height:16px;margin-left:3px;flex:none;background:linear-gradient(#c6e2f4,#7ab8e8);clip-path:polygon(0 0,93px 0,100% 5px,100% 100%,0 100%);text-align:center;font-size:12.500px;line-height:16px;color:#123;padding-right:2px}
.n-grip{width:2px;height:11px;margin-left:93px;background:repeating-linear-gradient(#bbb 0 2px,transparent 2px 4px);flex:none}
.n-left{margin-left:9px;width:5px}
.n-left::after{left:0;border-width:4px 5px 4px 0;border-right-color:#444;top:1px}
.htrack{width:314px;height:14px;margin-left:9px;flex:none;background:linear-gradient(#ececec,#fafafa 30%,#bdbdbd);border:1px solid #a8a8a8;border-radius:2px;display:flex;align-items:center;justify-content:center}
.htrack i{width:7px;height:7px;background:repeating-linear-gradient(90deg,#555 0 1px,transparent 1px 3px)}
.n-right{margin-left:9px;width:5px}
.n-right::after{left:0;border-width:4px 0 4px 5px;border-left-color:#444;top:1px}
.zoom-btn{display:flex;align-items:center;justify-content:flex-start;background:#e8e8e8}

/* panel */
.panel{width:210px;flex:none;display:flex;flex-direction:column;border-left:1px solid #ccc;border-right:1px solid #ddd;font-size:11px}
.p-head{height:20px;flex:none;display:flex;align-items:center;background:linear-gradient(#e4f2fb,#a4d6f4);padding-left:7px;margin-top:1px}
.p-title{font-size:11.500px;color:#123;white-space:nowrap}
.p-more{margin-left:auto;margin-right:2px;font-size:15px;font-weight:bold;color:#556;line-height:1;margin-bottom:3px}
.p-btn{width:16px;height:16px;margin-left:4px;border:1px solid #667;border-radius:1px;background:linear-gradient(#d8e4f0,#a8bcd0);display:flex;align-items:center;justify-content:center}
.p-btn i{width:10px;height:4px;background:#fff;border:1px solid #334;margin-top:3px}
.p-close{background:linear-gradient(#e09080,#c04830);color:#fff;font-weight:bold;font-size:12px;line-height:1;margin-right:2px}
.p-body{flex:1;padding:8px 7px 0 7px;display:flex;flex-direction:column}
.tabs{display:flex;align-items:flex-end;height:25px;flex:none}
.tab{width:20.500px;height:23px;background:linear-gradient(#f0f0f0,#c8c8c8);border:1px solid #aaa;border-bottom:0;display:flex;align-items:center;justify-content:center;margin-right:1px}
.tab-on{width:26px;height:26px;background:#f0f0f0;border-color:#888;margin-bottom:-1px;position:relative;z-index:1;margin-right:0}
.box{height:463px;width:194px;flex:none;border:1px solid #8a8a8a;position:relative;padding:6px 2px 0 2px;display:flex;flex-direction:column}
.row{display:flex;flex:none;align-items:center}
.row label{width:45px;white-space:nowrap;font-size:11.300px;color:#223}
.width-in{width:104px;height:20px;background:#fff;border:1px solid #eee;border-radius:2px;display:flex;align-items:center;justify-content:space-between;padding:0 4px 0 4px;margin-left:1px;font-size:11px}
.row-c{margin-top:9px}
.row-c label{margin-bottom:2px}
.color-in{width:41px;height:26px;border:2px solid #aaa;display:flex}
.color-in i{width:24px;background:#231f1c;border:1px solid #999}
.ddb{width:15px;background:linear-gradient(#eee,#c4c4c4);border:2px solid #777;display:flex;align-items:center;justify-content:center;flex:none}
.row-s{margin-top:8px}
.row-s label{margin-bottom:6px}
.style-in{width:107px;height:27px;border:1px solid #aaa;background:#fff;display:flex;align-items:center;justify-content:space-between;padding-left:1px}
.style-in .ddb{height:25px}
.ln{width:89px;height:2px;background:#111}
.ends{display:flex;gap:6px;margin:9px 0 0 45px;flex:none}
.end{width:51px;height:40px;border:1px solid #aaa;background:#fff;display:flex;align-items:stretch;justify-content:flex-end}
.end-2{justify-content:space-between}
.ln-r{width:16px;height:2px;background:#111;align-self:center}
.ln-l{width:16px;height:2px;background:#111;align-self:center;margin-left:1px}
.chk{display:flex;align-items:center;gap:4px;margin:7px 0 0 4px;flex:none;font-size:11px;letter-spacing:.1px;color:#223;white-space:nowrap}
.chk i{width:12px;height:12px;border:1px solid #888;background:linear-gradient(135deg,#e8e8e8,#fff);flex:none}
.chk-1{margin-top:18px}
.chk-2{margin-top:9px}
.more-btn{width:100px;height:22px;margin:42px 0 0 46px;border:1px solid #666;border-radius:3px;background:linear-gradient(#f4f4f4,#d4d4d4);text-align:center;line-height:20px;font-size:11.200px;flex:none}
.p-foot{display:flex;margin-top:6px;padding-left:78px;gap:8px;flex:none}
.lock{width:35px;height:21px;border:1px solid #2a6a90;border-radius:3px;background:linear-gradient(#e0f0fa,#b4daf0 50%,#6cb8e0);display:flex;align-items:center;justify-content:center}
.apply{width:73px;height:21px;border:1px solid #b4b4b4;border-radius:3px;text-align:center;line-height:19px;color:#999;letter-spacing:.1px}

/* palette */
.palette{width:20px;flex:none;display:flex;flex-direction:column;align-items:center;background:#f0f0f0}
.pal-play{width:12px;height:12px;margin-top:12px;border-radius:50%;border:1px solid #888;background:#eee;display:flex;align-items:center;justify-content:center}
.pal-play i{border:3px solid transparent;border-left:5px solid #111;border-right:0}
.pal-up{margin-top:12px;border:4px solid transparent;border-bottom:4px solid #888;border-top:0;flex:none}
.swatches{margin-top:4px;width:18px;flex:none;display:flex;flex-direction:column}
.swatches i{height:17px;width:18px;border:1px solid #777;border-top-width:0}
.sw-x{border-top-width:1px!important;background:linear-gradient(45deg,transparent 48%,#111 48%,#111 52%,transparent 52%),linear-gradient(-45deg,#fff 48%,#111 48%,#111 52%,#fff 52%)}
.c1{background:#231f1c}.c2{background:#3a3836}.c3{background:#4d4b49}.c4{background:#5e5d5b}.c5{background:#6e6d6b}.c6{background:#7f7f7e}.c7{background:#939392}.c8{background:#a6a6a5}.c9{background:#bcbcbb}.c10{background:#dcdcdb}.c11{background:#fff}.c12{background:#2e1070}.c13{background:#0080dc}.c14{background:#009a4c}
.c15{background:#ff0;border:2px solid #111!important}
.c16{background:#f03c00}.c17{background:#ee2b75}.c18{background:#a04070}.c19{background:#f58000}.c20{background:#ff9f9a}.c21{background:#6f6058}.c22{background:#b9aed4}.c23{background:#9080b4}.c24{background:#6478b0}.c25{background:#7058a0}.c26{background:#786a90}
.pal-dn{margin-top:8px;border:4px solid transparent;border-top:4px solid #666;border-bottom:0;flex:none}
.pal-end{margin-top:10px;width:8px;height:9px;border-left:2px solid #111;position:relative;flex:none}
.pal-end::after{content:"";position:absolute;left:0;top:0;border:4.500px solid transparent;border-right:6px solid #111;border-left:0}

/* status */
.status{height:45px;flex:none;display:flex;align-items:flex-end;background:linear-gradient(#fff,#f0f0f0);padding:0 0 5px 5px;border-bottom:1px solid #888;position:relative;font-size:10.800px;letter-spacing:.18px}
.coords{width:114px;flex:none;white-space:nowrap}
.msg{white-space:nowrap;width:696px;flex:none;overflow:hidden}
.st-icons{display:flex;flex-direction:column;gap:3px;margin-bottom:-1px;margin-left:5px}
.st-row{display:flex;align-items:center;justify-content:flex-end;gap:5px;width:38px}
.st-x,.st-d{width:18px;height:17px;border:1px solid #888;background:#231f1c}
.st-x{background:linear-gradient(45deg,transparent 48%,#111 48%,#111 52%,transparent 52%),linear-gradient(-45deg,#fff 48%,#111 48%,#111 52%,#fff 52%)}

/* taskbar */
.taskbar{height:60px;flex:1;display:flex;background:linear-gradient(#7a7a7a,#3c3c3c 25%,#161618 48%,#18181a);color:#f4f4f4;position:relative;font-size:13px;overflow:hidden}
.orb{width:42px;height:42px;margin:8px 0 0 9px;border-radius:50%;flex:none;background:radial-gradient(circle at 50% 70%,#38c0f0,#0c5a98 60%,#0a2a48);border:2px solid #3a3a3a;display:flex;align-items:center;justify-content:center}
.quick{width:72px;margin:7px 0 0 14px;display:grid;grid-template-columns:repeat(3,23.500px);grid-template-rows:repeat(2,30px);flex:none}
.q{width:16px;height:16px;display:flex;align-items:center;justify-content:center}
.q-d{background:#3cb0a0;border:1px solid #cde}
.q-e{font:bold italic 20px "Liberation Serif",serif;color:#2a88e8;-webkit-text-stroke:.5px #f0c040}
.more-q{width:24px;font-size:16px;font-weight:bold;line-height:16px;flex:none;text-align:center;padding-top:1px;margin-left:-1px;margin-right:1px}
.tasks{display:grid;grid-template-columns:repeat(4,156px);grid-template-rows:26px 26px;gap:4px;margin:2px 0 0 0;flex:none}
.task{display:flex;align-items:center;gap:5px;padding-left:8px;border:1px solid #505050;border-radius:3px;background:linear-gradient(#7c7c7c,#4c4c4c 45%,#1c1c1c 50%,#1c1c1c);font-size:12.300px;white-space:nowrap;overflow:hidden}
.task svg{flex:none}
.task-on{background:#121212;border-color:#666}
.lang{width:22px;margin:8px 0 0 44px;font-size:12px;flex:none}
.tray-more{position:absolute;left:873px;top:22px;font-size:16px;font-weight:bold;line-height:16px}
.tray{width:46px;display:grid;grid-template-columns:16px 16px;gap:3px 13px;margin:5px 0 0 22px;flex:none;height:36px}
.clock{width:62px;margin-left:auto;margin-right:18px;display:flex;flex-direction:column;align-items:center;gap:9px;font-size:11px;padding-top:1px;white-space:nowrap;flex:none;line-height:14px}
```
